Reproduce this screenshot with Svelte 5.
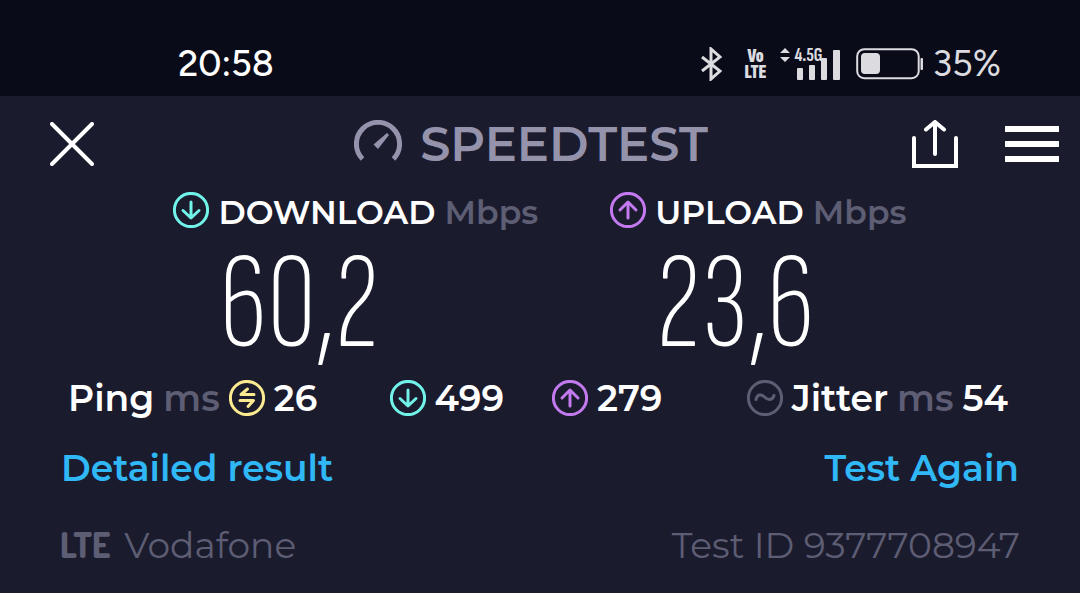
<script lang="ts">
	interface Speed {
		kind: 'down' | 'up';
		label: string;
		value: string;
	}
	const speeds: Speed[] = [
		{ kind: 'down', label: 'DOWNLOAD', value: '60,2' },
		{ kind: 'up', label: 'UPLOAD', value: '23,6' }
	];
	const ping = { idle: 26, down: 499, up: 279 };
	const jitter = 54;
</script>

{#snippet icon(kind: string)}
	<svg class="icon {kind}" viewBox="0 0 36 36" aria-hidden="true">
		<circle cx="18" cy="18" r="16.6" />
		{#if kind === 'down'}
			<path d="M18 10v15.5M10 18.5l8 7.5 8-7.5" />
		{:else if kind === 'up'}
			<path d="M18 26V11M10 18l8-8 8 8" />
		{:else if kind === 'idle'}
			<path d="M25 14.5H12l6.5-5.5M11 20.5h13.5l-5.5 6" />
		{:else}
			<path d="M9 19.5c1-5 5-6 8.5-2.5s8 3.5 9.5-1.5" />
		{/if}
	</svg>
{/snippet}

<div class="screen">
	<div class="status">
		<span class="clock">20:58</span>
		<div class="indicators">
			<svg class="bluetooth" viewBox="0 0 22 34" aria-hidden="true">
				<path d="M2 10l18 14-9 8V2l9 8L2 24" />
			</svg>
			<span class="volte"><span>Vo</span><span>LTE</span></span>
			<div class="signal">
				<svg viewBox="0 0 60 32" aria-hidden="true">
					<path d="M0 5l5-5 5 5zM0 9h10l-5 5z" />
					<rect x="17" y="20" width="6" height="12" rx="1" />
					<rect x="29" y="17" width="6" height="15" rx="1" />
					<rect x="41" y="10" width="6" height="22" rx="1" />
					<rect x="53" y="2" width="7" height="30" rx="1" />
				</svg>
				<span class="network">4.5G</span>
			</div>
			<svg class="battery" viewBox="0 0 68 32" aria-hidden="true">
				<rect class="shell" x="1.2" y="1.2" width="61.5" height="29" rx="7" />
				<rect x="5" y="5" width="19" height="21" rx="4" />
				<rect x="64.5" y="10" width="2.5" height="12" rx="1" />
			</svg>
			<span class="percent">35%</span>
		</div>
	</div>

	<header>
		<button class="close" aria-label="Close">
			<svg viewBox="0 0 44 44"><path d="M2 2l40 40M42 2L2 42" /></svg>
		</button>
		<h1>
			<svg class="gauge" viewBox="0 0 48 48" aria-hidden="true">
				<path class="dial" d="M8.5 39A21.6 21.6 0 1 1 39.5 39" />
				<path class="needle" d="M19.5 24.5L33 13l2 2-11 14z" />
			</svg>
			<span>SPEEDTEST</span>
		</h1>
		<div class="actions">
			<button class="share" aria-label="Share">
				<svg viewBox="0 0 48 48">
					<path d="M3 18v28h42V18" />
					<path d="M24 34V3M15 9.5l9-7.5 9 7.5" />
				</svg>
			</button>
			<button class="menu" aria-label="Menu">
				<svg viewBox="0 0 54 36"><path d="M0 3h54M0 18h54M0 33h54" /></svg>
			</button>
		</div>
	</header>

	<main>
		<section class="speeds">
			{#each speeds as speed}
				<div class="speed">
					<h2>
						{@render icon(speed.kind)}
						<span>{speed.label}</span>
						<span class="unit">Mbps</span>
					</h2>
					<p>{speed.value}</p>
				</div>
			{/each}
		</section>

		<section class="latency">
			<div class="item">
				<span>Ping</span>
				<span class="unit">ms</span>
				{@render icon('idle')}
				<span>{ping.idle}</span>
			</div>
			<div class="loaded">
				<div class="item">{@render icon('down')}<span>{ping.down}</span></div>
				<div class="item">{@render icon('up')}<span>{ping.up}</span></div>
			</div>
			<div class="item">
				{@render icon('jitter')}
				<span>Jitter</span>
				<span class="unit">ms</span>
				<span>{jitter}</span>
			</div>
		</section>

		<nav>
			<a href="#detailed">Detailed result</a>
			<a href="#again">Test Again</a>
		</nav>

		<footer>
			<span class="carrier"><b>LTE</b> <span>Vodafone</span></span>
			<span>Test ID 9377708947</span>
		</footer>
	</main>
</div>

<style>
	:global(body) {
		margin: 0;
		background: #1b1b2e;
	}
	.screen {
		font-family: 'Montserrat', 'Inter', sans-serif;
		background: #1b1b2e;
		color: #fff;
		min-height: 100vh;
	}
	svg {
		display: block;
		flex: none;
		fill: none;
		stroke: currentColor;
	}
	button {
		padding: 0;
		border: 0;
		background: none;
		color: #fff;
		cursor: pointer;
	}
	h1,
	h2,
	p {
		margin: 0;
	}
	.status {
		display: flex;
		justify-content: space-between;
		align-items: flex-end;
		box-sizing: border-box;
		height: 96px;
		padding: 0 79px 12px 178px;
		background: #090b18;
		font-family: 'Figtree', 'Roboto', sans-serif;
	}
	.clock,
	.percent {
		font-size: 36px;
		font-weight: 500;
		line-height: 40px;
	}
	.indicators {
		display: flex;
		align-items: center;
		height: 40px;
		color: #dcdce0;
	}
	.percent {
		font-weight: 400;
	}
	.bluetooth {
		width: 22px;
		height: 34px;
		stroke-width: 3;
		margin-right: 22px;
	}
	.volte {
		display: flex;
		flex-direction: column;
		align-items: center;
		margin-right: 14px;
		font: 900 20px/16px 'Sofia Sans Extra Condensed', 'Roboto', sans-serif;
	}
	.signal {
		position: relative;
		margin-right: 16px;
	}
	.signal svg {
		width: 60px;
		height: 32px;
		fill: currentColor;
		stroke: none;
	}
	.network {
		position: absolute;
		top: 0;
		left: 14px;
		font: 700 20px/14px 'Sofia Sans Extra Condensed', 'Roboto', sans-serif;
	}
	.battery {
		width: 68px;
		height: 32px;
		margin-right: 8px;
		fill: currentColor;
		stroke: none;
	}
	.battery .shell {
		fill: none;
		stroke: currentColor;
		stroke-width: 2;
	}
	header {
		display: grid;
		grid-template-columns: 1fr auto 1fr;
		align-items: center;
		height: 96px;
		padding: 0 21px;
	}
	.close {
		justify-self: start;
		margin-left: 29px;
	}
	.close svg {
		width: 44px;
		height: 44px;
		stroke-width: 4;
		stroke-linecap: round;
	}
	h1 {
		display: flex;
		align-items: center;
		gap: 18px;
		margin-right: 18px;
		color: #9493ab;
		font-size: 48px;
		font-weight: 600;
		line-height: 56px;
	}
	.gauge {
		width: 48px;
		height: 48px;
	}
	.dial {
		stroke-width: 5;
	}
	.needle {
		fill: currentColor;
		stroke: none;
	}
	.actions {
		display: flex;
		justify-content: flex-end;
		align-items: center;
		gap: 46px;
	}
	.share svg {
		width: 48px;
		height: 48px;
		stroke-width: 4;
		stroke-linecap: round;
	}
	.menu svg {
		width: 54px;
		height: 36px;
		stroke-width: 6;
	}
	.icon {
		width: 36px;
		height: 36px;
		stroke-width: 3;
		stroke-linecap: round;
		stroke-linejoin: round;
	}
	.down {
		color: #72f3ea;
	}
	.up {
		color: #c27aee;
	}
	.idle {
		color: #fbea8f;
	}
	.jitter,
	.unit {
		color: #5d5d73;
	}
	.speeds {
		display: flex;
		justify-content: center;
		gap: 72px;
	}
	h2 {
		display: flex;
		align-items: center;
		gap: 9px;
		font-size: 33px;
		font-weight: 600;
		line-height: 40px;
	}
	h2 .icon {
		margin-bottom: 4px;
	}
	.speed p {
		padding-left: 46px;
		font-family: 'Sofia Sans Extra Condensed', 'Roboto', sans-serif;
		font-size: 138px;
		font-weight: 200;
		line-height: 146px;
	}
	.latency {
		display: flex;
		justify-content: space-between;
		padding: 0 72px 0 68px;
	}
	.loaded {
		display: flex;
		gap: 48px;
		margin-right: 12px;
	}
	.item {
		display: flex;
		align-items: center;
		gap: 9px;
		font-size: 36px;
		font-weight: 600;
		line-height: 40px;
	}
	nav {
		display: flex;
		justify-content: space-between;
		padding: 30px 61px 0;
	}
	a {
		color: #30b7f6;
		font-size: 36px;
		font-weight: 600;
		line-height: 40px;
		text-decoration: none;
	}
	footer {
		display: flex;
		justify-content: space-between;
		padding: 37px 60px 26px;
		color: #5d5d73;
		font-size: 36px;
		font-weight: 400;
		line-height: 40px;
	}
	.carrier {
		display: flex;
		gap: 14px;
	}
	.carrier b {
		font-family: 'Dosis', 'Roboto', sans-serif;
		font-size: 34px;
		font-weight: 800;
	}
</style>
